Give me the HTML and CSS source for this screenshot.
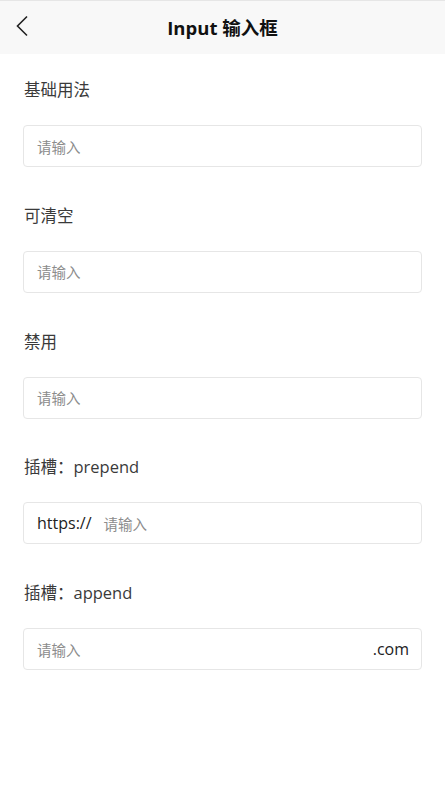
FILE: index.html
```html
<!DOCTYPE html>
<html lang="zh-CN">
<head>
<meta charset="utf-8">
<title>Input 输入框</title>
<link rel="stylesheet" href="styles.css">
</head>
<body>
<header class="nav">
  <span class="back">
    <svg width="14" height="22" viewBox="0 0 14 22"><path d="M12 1.5 L2.5 11 L12 20.5" fill="none" stroke="#222" stroke-width="1.6"/></svg>
  </span>
  <h1 class="nav-title">Input 输入框</h1>
</header>
<main class="content">
  <section class="demo">
    <h2 class="demo-title">基础用法</h2>
    <div class="field"><span class="placeholder">请输入</span></div>
  </section>
  <section class="demo">
    <h2 class="demo-title">可清空</h2>
    <div class="field"><span class="placeholder">请输入</span></div>
  </section>
  <section class="demo">
    <h2 class="demo-title">禁用</h2>
    <div class="field"><span class="placeholder">请输入</span></div>
  </section>
  <section class="demo">
    <h2 class="demo-title">插槽：prepend</h2>
    <div class="field"><span class="slot">https://</span><span class="placeholder">请输入</span></div>
  </section>
  <section class="demo">
    <h2 class="demo-title">插槽：append</h2>
    <div class="field"><span class="placeholder grow">请输入</span><span class="slot">.com</span></div>
  </section>
</main>
</body>
</html>
```

FILE: styles.css
```css
* { box-sizing: border-box; }
html, body { margin: 0; padding: 0; background: #fff; }
body {
  font-family: "Open Sans", "Noto Sans CJK SC", sans-serif;
  color: #333;
}
.nav {
  height: 54px;
  background: #f8f8f8;
  border-top: 1px solid #e6e6e6;
  display: flex;
  align-items: center;
  justify-content: center;
  position: relative;
}
.back {
  position: absolute;
  left: 15px;
  top: 14px;
  width: 14px;
  height: 22px;
  display: flex;
}
.nav-title {
  margin: 0;
  font-size: 18.5px;
  font-weight: 700;
  color: #111;
  line-height: 24px;
}
.demo {
  padding: 24px 23px 12.75px;
}
.demo-title {
  margin: 0 0 23px 1px;
  font-size: 16.5px;
  font-weight: 400;
  line-height: 24px;
  color: #3a3a3a;
}
.field {
  height: 42px;
  border: 1px solid #e6e6e6;
  border-radius: 4px;
  display: flex;
  align-items: center;
  padding: 0 12px 0 13px;
  gap: 12px;
  font-size: 15px;
}
.placeholder { color: #8c8c8c; font-size: 14.5px; }
.grow { flex: 1; }
.slot { color: #222; font-size: 16px; }
```
